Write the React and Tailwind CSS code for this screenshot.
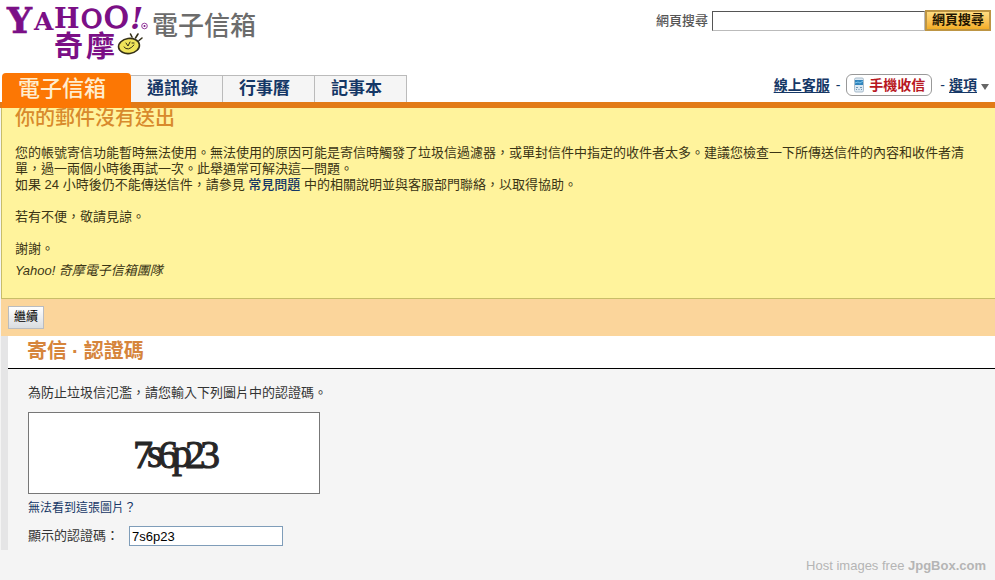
const tabs = ["通訊錄", "行事曆", "記事本"];

function Logo() {
  return (
    <svg
      className="h-[72px] w-[148px] shrink-0"
      viewBox="0 0 148 72"
      role="img"
      aria-label="Yahoo! 奇摩"
      fontFamily='"DejaVu Serif", serif'
      fontWeight="700"
      fill="#7b0f86"
    >
      <text x="7" y="33" fontSize="35" stroke="#7b0f86" strokeWidth="0.6">Y</text>
      <text x="34" y="30" fontSize="25">A</text>
      <text x="54" y="28" fontSize="27">H</text>
      <text x="81" y="28" fontSize="26" fontWeight="400" stroke="#7b0f86" strokeWidth="1.4">O</text>
      <text x="104" y="28" fontSize="30" fontWeight="400" stroke="#7b0f86" strokeWidth="1.6">O</text>
      <text x="130" y="29" fontSize="30" fontStyle="italic">!</text>
      <circle cx="144.500" cy="26" r="2.800" fill="none" stroke="#7b0f86" strokeWidth="0.800" />
      <circle cx="144.500" cy="26" r="1" />
      <g fontFamily='"Noto Sans CJK TC", sans-serif'>
        <text x="54" y="57" fontSize="29">奇</text>
        <text x="86" y="57" fontSize="29">摩</text>
      </g>
      <g stroke="#332f17" fill="none" strokeLinecap="round">
        <ellipse cx="129" cy="46" rx="10.500" ry="7.500" fill="#f0e45a" strokeWidth="1.600" transform="rotate(-8 129 46)" />
        <path d="M124 47 Q128 52 134 45 M126 43 L128 46 L130 42 M132 43 L134 43" strokeWidth="1" />
        <path d="M132 37 L130.500 34 M135.500 38 L138 34 M139 40.500 L142 38" strokeWidth="1.600" />
      </g>
    </svg>
  );
}

function PhoneIcon() {
  return (
    <svg className="h-4 w-3" viewBox="0 0 12 16" aria-hidden="true">
      <rect x="1.500" y="1" width="9" height="14" rx="1.500" fill="#dbe8f2" stroke="#a9bccb" />
      <rect x="2" y="3" width="8" height="5" fill="#2f84bd" />
      <path d="M2 6 L5 5 L7 6 L10 4" stroke="#7cc4ea" fill="none" />
      <path d="M3 10.500h2M7 10.500h2M3 12.500h1M5.500 12.500h1M8 12.500h1" stroke="#6f97b6" />
    </svg>
  );
}

function CaptchaImage() {
  return (
    <svg
      className="block h-[82px] w-[292px] border border-[#777] bg-white"
      viewBox="0 0 290 80"
      role="img"
      aria-label="認證碼圖片"
    >
      <text
        x="104 118 129 143 156 171"
        y="55 54 55 54 55 55"
        fontFamily='"Liberation Serif", serif'
        fontSize="40"
        fill="#262626"
        stroke="#262626"
        strokeWidth="1"
      >
        7s6p23
      </text>
    </svg>
  );
}

function Header() {
  return (
    <header className="bg-white">
      <div className="flex h-[73px] items-start justify-between">
        <div className="flex">
          <Logo />
          <h1 className="ml-1 mt-2 text-[26px] leading-9 font-medium text-[#6c6c6c]">電子信箱</h1>
        </div>
        <form className="mr-1 mt-[10px] flex items-center" onSubmit={(e) => e.preventDefault()}>
          <label htmlFor="web-search" className="mr-1 text-[13px] leading-5 font-medium text-[#555]">
            網頁搜尋
          </label>
          <input
            id="web-search"
            type="text"
            className="h-5 w-[213px] border border-[#bbb] border-t-[#555] border-l-[#555] bg-white px-1 text-[13px] outline-none"
          />
          <button className="h-[21px] w-[66px] border-2 border-[#bd9544] bg-linear-to-b from-[#ffdc80] to-[#f3ad21] pb-1 text-[13px] leading-4 font-bold text-[#221500]">
            網頁搜尋
          </button>
        </form>
      </div>
      <div className="flex h-[35px] items-start justify-between bg-linear-to-b from-white from-[29px] to-[#e27b17] to-[29px]">
        <nav className="ml-[2px] flex text-[17px] font-bold text-[#153766]">
          <a
            href="#mail"
            className="flex h-[35px] w-[129px] items-center rounded-t-sm bg-[#fc7704] pb-1 pl-4 text-[22px] font-medium text-[#ffedcf]"
          >
            電子信箱
          </a>
          {tabs.map((tab) => (
            <a
              key={tab}
              href="#tab"
              className="mt-[2px] flex h-[27px] w-[92px] items-center border-t border-r border-[#bbb] bg-[#f5f5f5] pl-4"
            >
              {tab}
            </a>
          ))}
        </nav>
        <div className="mr-[6px] flex h-6 items-center text-sm font-bold text-[#153766]">
          <a href="#help" className="underline underline-offset-2">線上客服</a>
          <span className="mx-1.5 font-normal">-</span>
          <a
            href="#mobile"
            className="mr-1 flex h-[22px] items-center gap-1 rounded-md border border-[#999] px-1.5 text-[#b81722]"
          >
            <PhoneIcon />
            手機收信
          </a>
          <span className="mx-1 font-normal">-</span>
          <a href="#options" className="underline underline-offset-2">選項</a>
          <svg className="mt-1 ml-1 h-[6px] w-2" viewBox="0 0 8 6" aria-hidden="true">
            <path d="M0 0H8L4 6Z" fill="#666" />
          </svg>
        </div>
      </div>
    </header>
  );
}

export default function App() {
  return (
    <div
      lang="zh-Hant"
      className="min-h-screen bg-[#f4f4f4] font-['Liberation_Sans','Noto_Sans_CJK_TC',sans-serif] text-[13px] leading-4 text-[#333]"
    >
      <Header />
      <main className="ml-px">
        <section className="border-b border-l border-[#c9bd68] bg-[#fff39c] pr-6 pb-[19px] pl-[13px] text-[#3b3515]">
          <h2 className="text-[20px] leading-5 font-medium text-[#d88a2c]">你的郵件沒有送出</h2>
          <p className="mt-[17px]">
            您的帳號寄信功能暫時無法使用。無法使用的原因可能是寄信時觸發了垃圾信過濾器，或單封信件中指定的收件者太多。建議您檢查一下所傳送信件的內容和收件者清單，過一兩個小時後再試一次。此舉通常可解決這一問題。
            <br />
            如果 24 小時後仍不能傳送信件，請參見{" "}
            <a href="#faq" className="font-medium text-[#153766]">常見問題</a>{" "}
            中的相關說明並與客服部門聯絡，以取得協助。
          </p>
          <p className="mt-4">若有不便，敬請見諒。</p>
          <p className="mt-4">謝謝。</p>
          <p className="mt-1.5 italic">Yahoo! 奇摩電子信箱團隊</p>
        </section>
        <div className="flex h-[37px] items-center bg-[#fbd59b] pl-[7px]">
          <button className="h-[23px] w-9 border border-[#b9bcc0] bg-linear-to-b from-white to-[#d9dde0] pb-0.5 text-xs text-black">
            繼續
          </button>
        </div>
        <section className="border-l-[7px] border-[#e5e5e6] bg-[#f5f5f5]">
          <h2 className="h-[33px] border-b border-black bg-white pl-[19px] text-[20px] leading-[30px] font-bold text-[#d6853c]">
            寄信<span className="px-[5px]">·</span>認證碼
          </h2>
          <form className="pt-4 pb-1 pl-5" onSubmit={(e) => e.preventDefault()}>
            <p className="mb-[11px]">為防止垃圾信氾濫，請您輸入下列圖片中的認證碼。</p>
            <CaptchaImage />
            <p className="mt-1.5 text-xs leading-4">
              <a href="#captcha-help" className="text-[#153766]">無法看到這張圖片？</a>
            </p>
            <div className="mt-2.5 flex items-center">
              <label htmlFor="code" className="w-[101px]">顯示的認證碼：</label>
              <input
                id="code"
                type="text"
                defaultValue="7s6p23"
                className="h-5 w-[154px] border border-[#7f9db9] bg-white px-[2px] text-[13px] text-black outline-none"
              />
            </div>
          </form>
        </section>
      </main>
      <footer className="flex justify-end pt-2 pr-[9px] text-[13px] leading-4 text-[#b5b5b5]">
        <p>
          Host images free <strong>JpgBox.com</strong>
        </p>
      </footer>
    </div>
  );
}
